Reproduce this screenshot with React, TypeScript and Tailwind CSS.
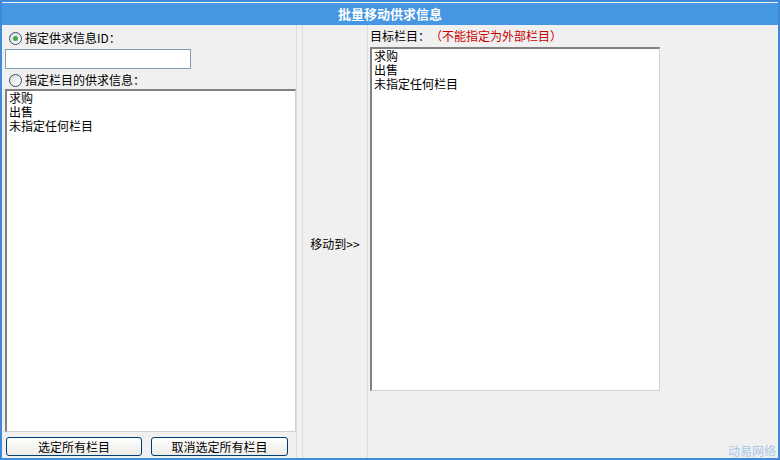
import React from "react";

const font = { fontFamily: '"Noto Sans CJK SC", "Liberation Sans", sans-serif' };

function Radio({ checked }: { checked?: boolean }) {
  return (
    <span className="inline-flex h-[13px] w-[13px] shrink-0 items-center justify-center rounded-full border border-[#2f4f7a] bg-gradient-to-br from-[#dcdcd6] to-white">
      {checked && <span className="h-[5px] w-[5px] rounded-full bg-[#3fa84a]" />}
    </span>
  );
}

function ListBox({ className }: { className: string }) {
  const items = ["求购", "出售", "未指定任何栏目"];
  return (
    <div className={`border-t-2 border-l-2 border-b border-r border-t-[#808080] border-l-[#808080] border-b-[#d4d0c8] border-r-[#d4d0c8] bg-white px-[2px] ${className}`}>
      {items.map((t) => (
        <div key={t} className="h-[14px] text-[12px] leading-[14px] text-black">
          {t}
        </div>
      ))}
    </div>
  );
}

function Button({ label, className }: { label: string; className: string }) {
  return (
    <button className={`h-[19px] rounded-[3px] border border-[#003c74] bg-gradient-to-b from-white to-[#ecebe6] text-[12px] leading-[17px] text-black ${className}`}>
      {label}
    </button>
  );
}

export default function App() {
  return (
    <div className="relative h-[460px] w-[780px] overflow-hidden border-2 border-[#3f8ad8] bg-[#f0f0f0]" style={font}>
      <div className="mt-[1px] flex h-[22px] items-center justify-center bg-[#4596e3] text-[13px] font-bold text-white">
        批量移动供求信息
      </div>
      <div className="flex h-[433px]">
        {/* source column */}
        <div className="flex w-[295px] flex-col border-r border-[#dcdcdc] pl-[3px]">
          <div className="mt-[4px] flex h-[18px] items-center gap-[3px] pl-[4px] text-[12px]">
            <Radio checked />
            <span>指定供求信息ID：</span>
          </div>
          <div className="mt-[2px] h-[20px] w-[186px] border border-[#7f9db9] bg-white" />
          <div className="mt-[2px] flex h-[18px] items-center gap-[3px] pl-[4px] text-[12px]">
            <Radio />
            <span>指定栏目的供求信息：</span>
          </div>
          <ListBox className="h-[343px] w-[291px]" />
          <div className="mt-[5px] flex gap-[9px] pl-[1px]">
            <Button label="选定所有栏目" className="w-[136px]" />
            <Button label="取消选定所有栏目" className="w-[137px]" />
          </div>
        </div>
        {/* action column */}
        <div className="ml-[5px] flex w-[66px] items-center justify-center border-x border-[#dcdcdc] pt-[4px] text-[12px]">
          移动到&gt;&gt;
        </div>
        {/* target column */}
        <div className="flex flex-1 flex-col pl-[2px]">
          <div className="mt-[2px] flex h-[18px] items-center text-[12px]">
            <span>目标栏目：</span>
            <span className="text-[#cc0000]">（不能指定为外部栏目）</span>
          </div>
          <ListBox className="mt-[2px] h-[344px] w-[290px]" />
        </div>
      </div>
      <div className="absolute bottom-[0px] right-[2px] text-[12px] leading-[14px] text-[#a8c8e8]">动易网络</div>
    </div>
  );
}
